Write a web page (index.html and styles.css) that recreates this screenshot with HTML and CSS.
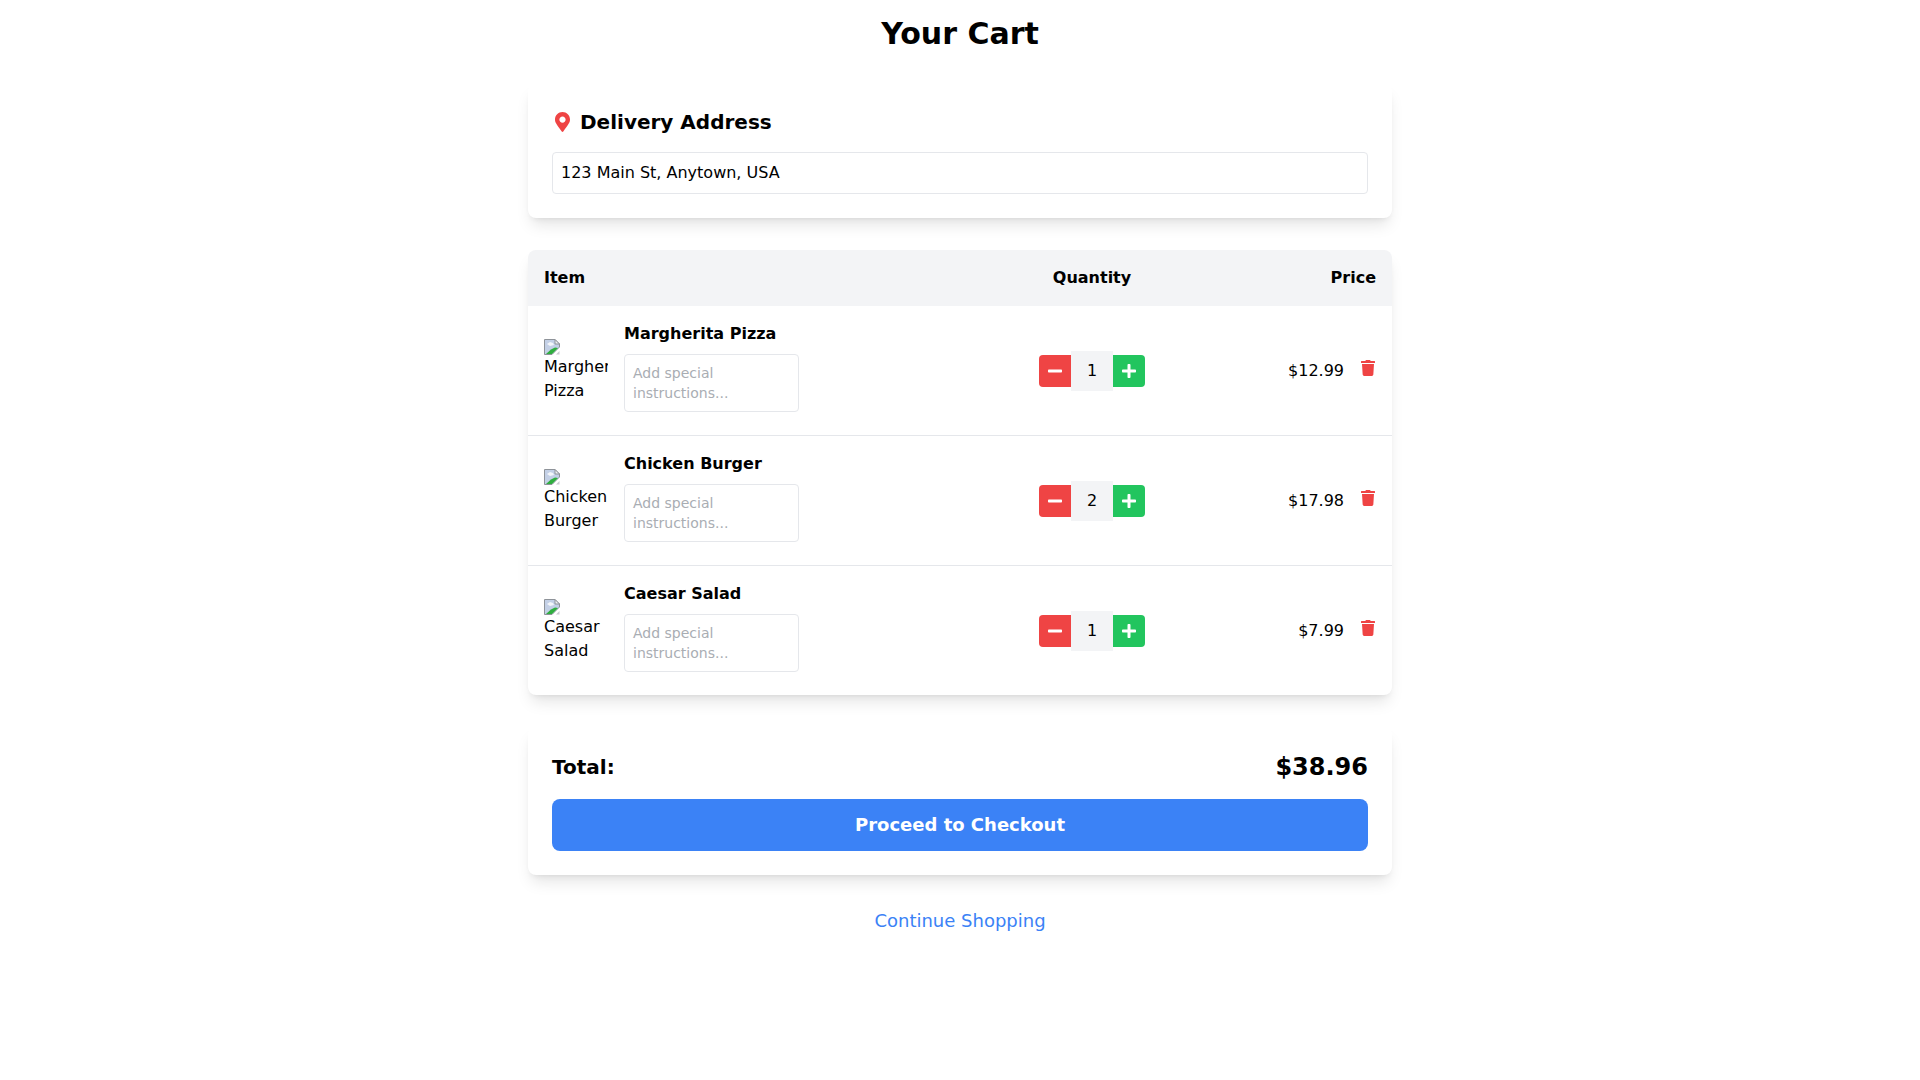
FILE: index.html
```html
<!DOCTYPE html>
<html lang="en">
	<head>
		<meta charset="UTF-8" />
		<meta name="viewport" content="width=device-width, initial-scale=1.0" />
		<title>Your Cart</title>
		<link rel="stylesheet" href="styles.css">
	</head>
	<body>
		<svg class="defs" width="0" height="0" aria-hidden="true">
			<symbol id="broken" viewBox="0 0 16 16">
				<path d="M.5.5H11L15.500 5V8L8 15.500H.5z" fill="#c3d0e6" stroke="#8e9399"/>
				<path d="M11 .5V5h4.500z" fill="#eef0f2" stroke="#8e9399"/>
				<path d="M3 5l3-2 3 1 1 2-4 1z" fill="#f4f6fa"/>
				<path d="M2 15l5-4.500 4-2 3 .5-6 6z" fill="#2fae3f"/>
				<path d="M12 15.500h3.500V12z" fill="#c9ccd1"/>
			</symbol>
			<symbol id="minus" viewBox="0 0 448 512">
				<path d="M416 208H32c-17.670 0-32 14.330-32 32v32c0 17.670 14.330 32 32 32h384c17.670 0 32-14.330 32-32v-32c0-17.670-14.330-32-32-32z"/>
			</symbol>
			<symbol id="plus" viewBox="0 0 448 512">
				<path d="M416 208H272V64c0-17.670-14.330-32-32-32h-32c-17.670 0-32 14.330-32 32v144H32c-17.670 0-32 14.330-32 32v32c0 17.670 14.330 32 32 32h144v144c0 17.670 14.330 32 32 32h32c17.670 0 32-14.330 32-32V304h144c17.670 0 32-14.330 32-32v-32c0-17.670-14.330-32-32-32z"/>
			</symbol>
			<symbol id="trash" viewBox="0 0 448 512">
				<path d="M432 32H312l-9.400-18.700A24 24 0 0 0 281.100 0H166.800a23.720 23.720 0 0 0-21.400 13.300L136 32H16A16 16 0 0 0 0 48v32a16 16 0 0 0 16 16h416a16 16 0 0 0 16-16V48a16 16 0 0 0-16-16zM53.200 467a48 48 0 0 0 47.900 45h245.800a48 48 0 0 0 47.900-45L416 128H32z"/>
			</symbol>
		</svg>

		<main class="container">
			<h1>Your Cart</h1>

			<section class="card address">
				<h2>
					<svg class="pin" viewBox="0 0 384 512"><path d="M172.268 501.670C26.970 291.031 0 269.413 0 192 0 85.961 85.961 0 192 0s192 85.961 192 192c0 77.413-26.970 99.031-172.268 309.670-9.535 13.774-29.930 13.773-39.464 0zM192 272c44.183 0 80-35.817 80-80s-35.817-80-80-80-80 35.817-80 80 35.817 80 80 80z"/></svg>
					Delivery Address
				</h2>
				<input type="text" class="address-input" value="123 Main St, Anytown, USA" />
			</section>

			<section class="card cart">
				<table>
					<thead>
						<tr>
							<th class="col-item">Item</th>
							<th class="col-qty">Quantity</th>
							<th class="col-price">Price</th>
						</tr>
					</thead>
					<tbody>
						<tr>
							<td>
								<div class="item">
									<div class="thumb"><svg class="broken"><use href="#broken"/></svg>Margherita Pizza</div>
									<div>
										<div class="item-name">Margherita Pizza</div>
										<textarea class="note" placeholder="Add special instructions..."></textarea>
									</div>
								</div>
							</td>
							<td>
								<div class="qty">
									<button class="qty-btn minus"><svg><use href="#minus"/></svg></button>
									<span class="qty-value">1</span>
									<button class="qty-btn plus"><svg><use href="#plus"/></svg></button>
								</div>
							</td>
							<td class="price">$12.99<button class="remove"><svg><use href="#trash"/></svg></button></td>
						</tr>
						<tr>
							<td>
								<div class="item">
									<div class="thumb"><svg class="broken"><use href="#broken"/></svg>Chicken Burger</div>
									<div>
										<div class="item-name">Chicken Burger</div>
										<textarea class="note" placeholder="Add special instructions..."></textarea>
									</div>
								</div>
							</td>
							<td>
								<div class="qty">
									<button class="qty-btn minus"><svg><use href="#minus"/></svg></button>
									<span class="qty-value">2</span>
									<button class="qty-btn plus"><svg><use href="#plus"/></svg></button>
								</div>
							</td>
							<td class="price">$17.98<button class="remove"><svg><use href="#trash"/></svg></button></td>
						</tr>
						<tr>
							<td>
								<div class="item">
									<div class="thumb"><svg class="broken"><use href="#broken"/></svg>Caesar Salad</div>
									<div>
										<div class="item-name">Caesar Salad</div>
										<textarea class="note" placeholder="Add special instructions..."></textarea>
									</div>
								</div>
							</td>
							<td>
								<div class="qty">
									<button class="qty-btn minus"><svg><use href="#minus"/></svg></button>
									<span class="qty-value">1</span>
									<button class="qty-btn plus"><svg><use href="#plus"/></svg></button>
								</div>
							</td>
							<td class="price">$7.99<button class="remove"><svg><use href="#trash"/></svg></button></td>
						</tr>
					</tbody>
				</table>
			</section>

			<section class="card summary">
				<div class="total">
					<span class="total-label">Total:</span>
					<span class="total-value">$38.96</span>
				</div>
				<button class="checkout">Proceed to Checkout</button>
			</section>

			<div class="continue"><a href="#">Continue Shopping</a></div>
		</main>
	</body>
</html>
```

FILE: styles.css
```css
* {
	box-sizing: border-box;
}
body {
	font-family: "DejaVu Sans", sans-serif;
	font-size: 16px;
	line-height: 24px;
	margin: 0;
	padding: 0;
	color: #000;
	background-color: #fff;
}
.defs {
	position: absolute;
}
.container {
	max-width: 896px;
	margin: 0 auto;
	padding: 16px;
}
h1 {
	font-size: 30px;
	line-height: 36px;
	font-weight: bold;
	text-align: center;
	margin: 0 0 32px;
}
h2 {
	display: flex;
	align-items: center;
	font-size: 20px;
	line-height: 28px;
	font-weight: 600;
	margin: 0 0 16px;
}
.card {
	background-color: #fff;
	border-radius: 8px;
	box-shadow: 0 10px 15px -3px rgba(0, 0, 0, 0.1), 0 4px 6px -4px rgba(0, 0, 0, 0.1);
	margin-bottom: 32px;
}
.address,
.summary {
	padding: 24px;
}
.pin {
	width: 15px;
	height: 20px;
	margin: 0 10px 0 3px;
	fill: #ef4444;
}
.address-input {
	display: block;
	width: 100%;
	height: 42px;
	padding: 7px 8px 9px;
	font: inherit;
	color: #000;
	border: 1px solid #e5e7eb;
	border-radius: 4px;
}
.cart {
	overflow: hidden;
}
table {
	width: 100%;
	border-collapse: collapse;
	table-layout: fixed;
}
th {
	padding: 16px;
	font-weight: bold;
	background-color: #f3f4f6;
}
td {
	padding: 16px;
	vertical-align: middle;
}
tbody tr + tr {
	border-top: 1px solid #e5e7eb;
}
.col-item {
	text-align: left;
	width: 495px;
}
.col-qty {
	text-align: center;
	width: 138px;
}
.col-price {
	text-align: right;
}
.item {
	display: flex;
	align-items: center;
	gap: 16px;
}
.thumb {
	width: 64px;
	height: 64px;
	flex: none;
	overflow: hidden;
}
.broken {
	display: block;
	width: 16px;
	height: 16px;
}
.item-name {
	font-weight: 600;
	margin-bottom: 8px;
}
.note {
	width: 175px;
	height: 58px;
	padding: 8px;
	font: inherit;
	font-size: 14px;
	line-height: 20px;
	border: 1px solid #e5e7eb;
	border-radius: 4px;
	resize: none;
	overflow: hidden;
}
.note::placeholder {
	color: #a9adb3;
}
.qty {
	display: flex;
	align-items: center;
	justify-content: center;
}
.qty-btn {
	width: 32px;
	height: 32px;
	display: flex;
	align-items: center;
	justify-content: center;
	padding: 0;
	border: none;
	color: #fff;
	cursor: pointer;
}
.qty-btn svg {
	width: 14px;
	height: 16px;
	fill: currentColor;
}
.minus {
	background-color: #ef4444;
	border-radius: 4px 0 0 4px;
}
.plus {
	background-color: #22c55e;
	border-radius: 0 4px 4px 0;
}
.qty-value {
	width: 42px;
	height: 40px;
	line-height: 40px;
	text-align: center;
	background-color: #f3f4f6;
}
.price {
	text-align: right;
	white-space: nowrap;
}
.remove {
	padding: 0 1px 0 0;
	margin-left: 17px;
	border: none;
	background: none;
	color: #ef4444;
	cursor: pointer;
}
.remove svg {
	display: block;
	width: 14px;
	height: 16px;
	fill: currentColor;
}
.total {
	display: flex;
	justify-content: space-between;
	align-items: center;
	margin-bottom: 16px;
}
.total-label {
	font-size: 20px;
	line-height: 28px;
	font-weight: 600;
}
.total-value {
	font-size: 24px;
	line-height: 32px;
	font-weight: bold;
}
.checkout {
	display: block;
	width: 100%;
	padding: 12px;
	font: inherit;
	font-size: 18px;
	line-height: 28px;
	font-weight: 600;
	color: #fff;
	background-color: #3b82f6;
	border: none;
	border-radius: 8px;
	cursor: pointer;
}
.continue {
	text-align: center;
	font-size: 18px;
	line-height: 28px;
}
.continue a {
	color: #3b82f6;
	text-decoration: none;
}
```
